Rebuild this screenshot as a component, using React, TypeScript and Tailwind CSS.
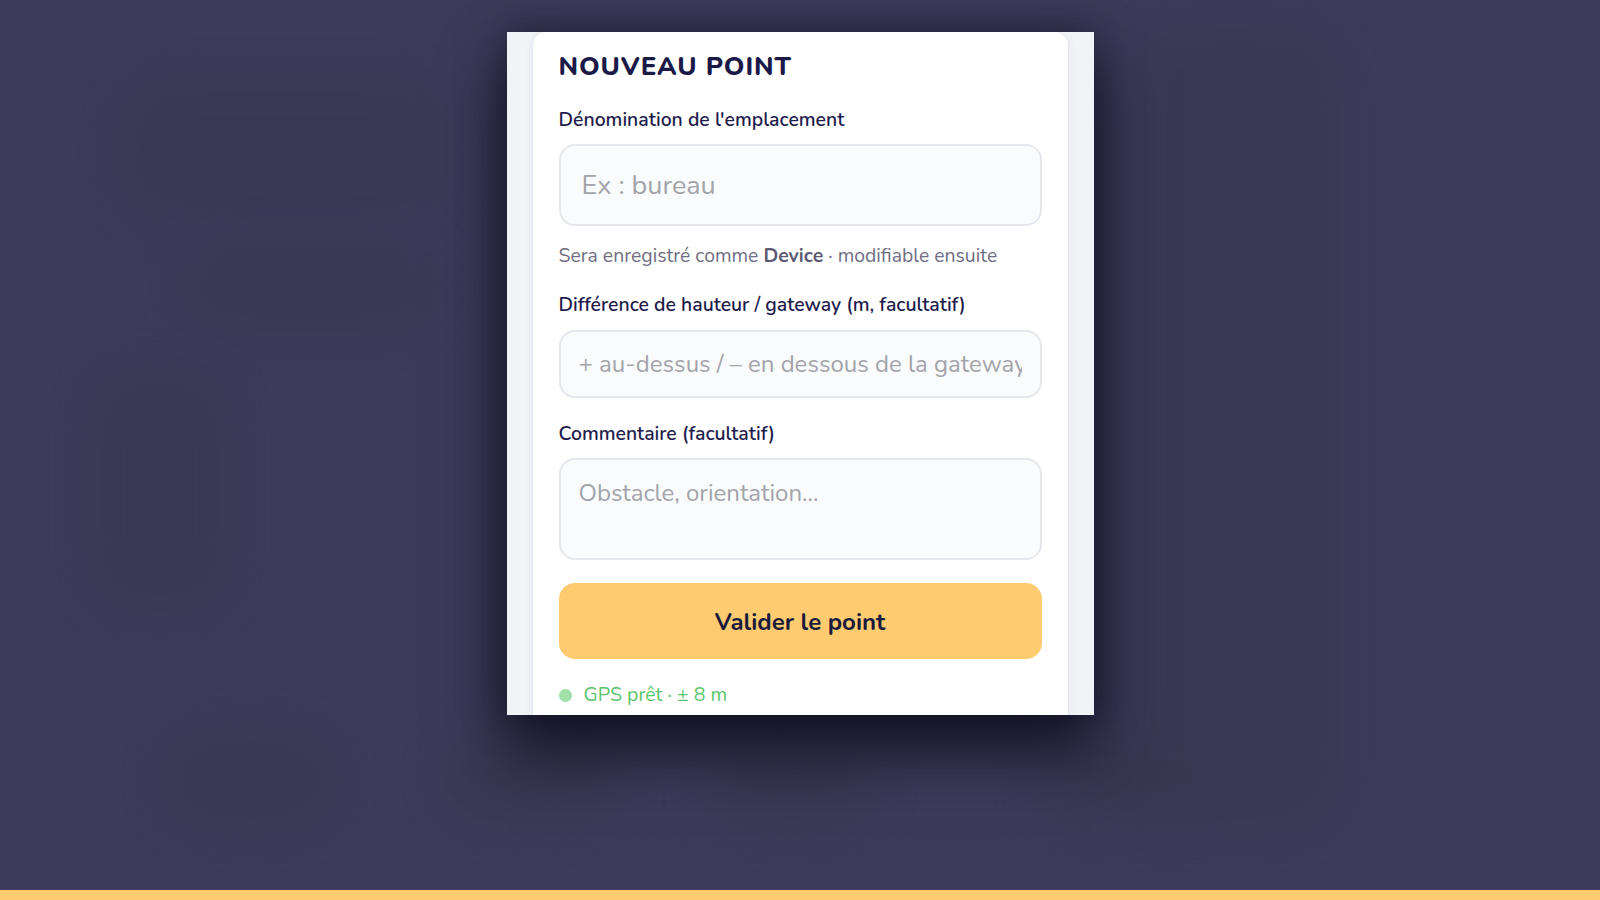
import React from 'react';

const blobs = [
  'left-[130px] top-[90px] w-[310px] h-[120px] rounded-[40px]',
  'left-[190px] top-[250px] w-[240px] h-[70px] rounded-[30px]',
  'left-[100px] top-[380px] w-[120px] h-[220px] rounded-[30px]',
  'left-[170px] top-[740px] w-[160px] h-[80px] rounded-full',
  'left-[450px] top-[735px] w-[170px] h-[80px] rounded-full',
  'left-[710px] top-[745px] w-[160px] h-[75px] rounded-full',
  'left-[1040px] top-[740px] w-[150px] h-[80px] rounded-full',
  'left-[1140px] top-[40px] w-[190px] h-[780px] rounded-[40px]',
];

export default function App() {
  return (
    <div className="relative flex h-screen w-full flex-col overflow-hidden bg-[#3d3b59] font-['Nunito','Lato',sans-serif]">
      {/* fond flouté */}
      {blobs.map((b, i) => (
        <div key={i} className={`pointer-events-none absolute bg-[#38364f] opacity-70 blur-xl ${b}`} />
      ))}

      <div className="relative flex-1">
        <div className="mx-auto mt-[32px] h-[683px] w-[587px] overflow-hidden bg-[#f2f3f7] px-[25px] shadow-[0_34px_60px_rgba(14,13,30,0.9),0_0_36px_rgba(18,17,36,0.55)]">
          <div className="h-[720px] rounded-t-[14px] border-x border-[#e6e7ee] bg-white px-[26px] pt-[18px] shadow-[0_0_10px_rgba(20,20,60,0.05)]">
            <h1 className="text-[26px] leading-[34px] font-extrabold tracking-[0.035em] text-[#1b1947]">
              NOUVEAU POINT
            </h1>

            <label className="mt-[23px] block text-[19.4px] leading-[26px] font-semibold text-[#1f1d4d]">
              Dénomination de l'emplacement
            </label>
            <input
              type="text"
              placeholder="Ex : bureau"
              className="mt-[11px] block h-[82px] w-full rounded-[16px] border-2 border-[#e6e7ed] bg-[#fafbfd] pl-[21px] text-[27px] text-[#1f1d4d] outline-none placeholder:text-[#a3a3aa]"
            />
            <p className="mt-[17px] text-[19.4px] leading-[26px] text-[#6f6e82]">
              Sera enregistré comme <span className="font-bold text-[#5c5b72]">Device</span> · modifiable ensuite
            </p>

            <label className="mt-[23px] block text-[19.4px] leading-[26px] font-semibold text-[#1f1d4d]">
              Différence de hauteur / gateway (m, facultatif)
            </label>
            <input
              type="text"
              placeholder="+ au-dessus / – en dessous de la gateway"
              className="mt-[12px] block h-[68px] w-full rounded-[16px] border-2 border-[#e6e7ed] bg-[#fafbfd] pr-[18px] pl-[18px] text-[24px] text-[#1f1d4d] outline-none placeholder:text-[#a3a3aa]"
            />

            <label className="mt-[23px] block text-[19.4px] leading-[26px] font-semibold text-[#1f1d4d]">
              Commentaire (facultatif)
            </label>
            <textarea
              placeholder="Obstacle, orientation..."
              className="mt-[11px] block h-[102px] w-full resize-none rounded-[16px] border-2 border-[#e6e7ed] bg-[#fafbfd] px-[18px] pt-[17px] text-[24px] leading-[32px] text-[#1f1d4d] outline-none placeholder:text-[#a3a3aa]"
            />

            <button className="mt-[23px] flex h-[76px] w-full items-center justify-center rounded-[16px] bg-[#ffcb70] pt-[1px] text-[24px] font-bold text-[#1b1a3c]">
              Valider le point
            </button>

            <div className="mt-[23px] flex items-center gap-[12px] text-[19.5px] leading-[26px] text-[#5cc56c]">
              <span className="h-[13px] w-[13px] rounded-full bg-[#9fdfa8]" />
              <span>GPS prêt · ± 8 m</span>
            </div>
          </div>
        </div>
      </div>

      <div className="relative h-[10px] w-full bg-[#ffcb70]" />
    </div>
  );
}
